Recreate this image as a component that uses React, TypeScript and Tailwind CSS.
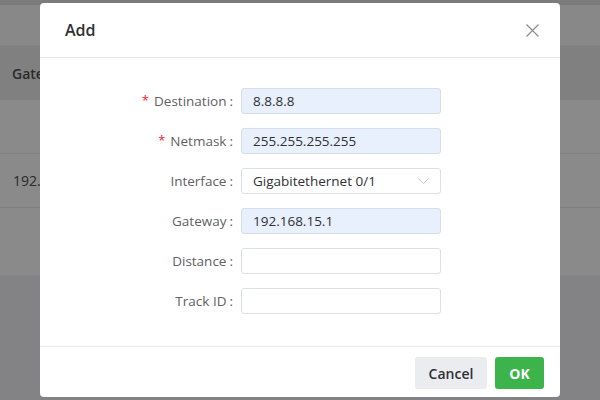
import React from "react";

const font = { fontFamily: '"Open Sans", "Noto Sans", "Liberation Sans", sans-serif' };

function Row({ label, required, children }: { label: string; required?: boolean; children: React.ReactNode }) {
  return (
    <div className="flex items-center h-[26px]">
      <div className="w-[201px] pr-[8px] flex justify-end items-center text-[13.5px] text-[#5f6166]">
        {required && <span className="text-[#f5222d] mr-[5px] text-[13px]">*</span>}
        <span>{label}</span>
        <span className="ml-[3px]">:</span>
      </div>
      {children}
    </div>
  );
}

function Field({ value, filled }: { value?: string; filled?: boolean }) {
  return (
    <div
      className={`w-[200px] h-[26px] rounded-[3px] border flex items-center px-[11px] text-[13.5px] text-[#303133] ${
        filled ? "bg-[#e8f0fe] border-[#d9dde4]" : "bg-white border-[#dcdfe6]"
      }`}
    >
      {value}
    </div>
  );
}

export default function App() {
  return (
    <div className="relative w-[600px] h-[400px] overflow-hidden bg-[#838385]" style={font}>
      {/* background page under overlay */}
      <div className="flex flex-col">
        <div className="h-[3px] bg-[#7c7c7c]" />
        <div className="h-[2px] bg-[#7a7a7a]" />
        <div className="h-[41px] bg-[#888888] border-b border-[#848484]" />
        <div className="h-[54px] bg-[#808080] flex items-center pl-[12px] text-[14px] text-[#2b2b2b] font-semibold">Gateway</div>
        <div className="h-[54px] bg-[#8a8a8a] border-b border-[#7e7e7e]" />
        <div className="h-[54px] bg-[#8a8a8a] border-b border-[#7e7e7e] flex items-center pl-[13px] text-[14px] text-[#2b2b2b]">192.168.15.1</div>
        <div className="h-[67px] bg-[#8a8a8a]" />
      </div>

      {/* modal */}
      <div className="absolute top-[3px] left-[40px] w-[520px] h-[394px] bg-white rounded-[4px] flex flex-col">
        <div className="h-[55px] border-b border-[#e8e8e8] flex items-center justify-between pl-[25px] pr-[21px]">
          <span className="text-[16px] font-semibold text-[#303133]">Add</span>
          <svg width="13" height="13" viewBox="0 0 13 13" fill="none" stroke="#8c8c8c" strokeWidth="1.2">
            <path d="M0.5 0.5L12.5 12.5M12.5 0.5L0.5 12.5" />
          </svg>
        </div>
        <div className="flex-1 flex flex-col gap-[14px] pt-[30px]">
          <Row label="Destination" required>
            <Field value="8.8.8.8" filled />
          </Row>
          <Row label="Netmask" required>
            <Field value="255.255.255.255" filled />
          </Row>
          <Row label="Interface">
            <div className="w-[200px] h-[26px] rounded-[3px] border border-[#dcdfe6] bg-white flex items-center justify-between pl-[11px] pr-[11px] text-[13.5px] text-[#303133]">
              <span>Gigabitethernet 0/1</span>
              <svg width="11" height="7" viewBox="0 0 11 7" fill="none" stroke="#c0c4cc" strokeWidth="1">
                <path d="M0.5 0.5L5.5 5.5L10.5 0.5" />
              </svg>
            </div>
          </Row>
          <Row label="Gateway">
            <Field value="192.168.15.1" filled />
          </Row>
          <Row label="Distance">
            <Field />
          </Row>
          <Row label="Track ID">
            <Field />
          </Row>
        </div>
        <div className="h-[51px] border-t border-[#e8e8e8] flex justify-end items-start pt-[10px] pr-[16px] gap-[8px]">
          <button className="h-[32px] w-[72px] rounded-[3px] bg-[#ebecf0] text-[14px] font-semibold text-[#303133]">Cancel</button>
          <button className="h-[32px] w-[49px] rounded-[3px] bg-[#3cb44b] text-[14px] font-bold text-white">OK</button>
        </div>
      </div>
    </div>
  );
}
